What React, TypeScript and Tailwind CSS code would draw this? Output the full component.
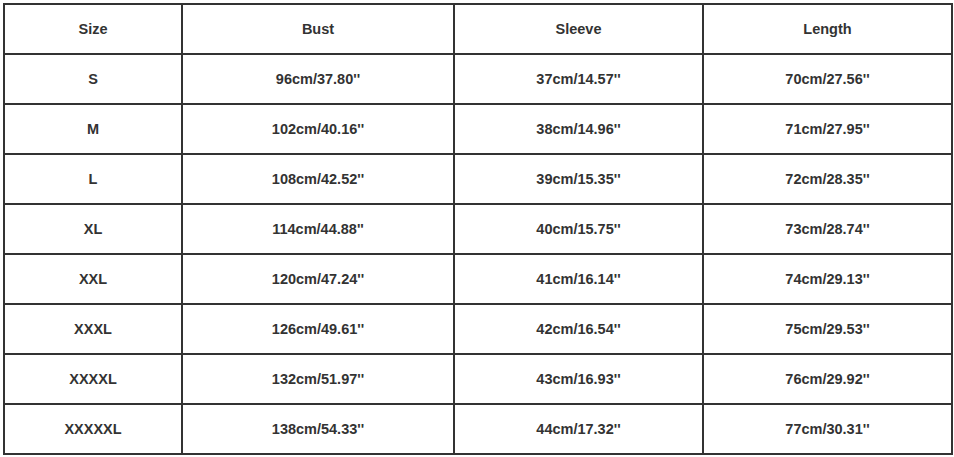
import React from "react";

const header = ["Size", "Bust", "Sleeve", "Length"];
const rows: string[][] = [
  ["S", "96cm/37.80''", "37cm/14.57''", "70cm/27.56''"],
  ["M", "102cm/40.16''", "38cm/14.96''", "71cm/27.95''"],
  ["L", "108cm/42.52''", "39cm/15.35''", "72cm/28.35''"],
  ["XL", "114cm/44.88''", "40cm/15.75''", "73cm/28.74''"],
  ["XXL", "120cm/47.24''", "41cm/16.14''", "74cm/29.13''"],
  ["XXXL", "126cm/49.61''", "42cm/16.54''", "75cm/29.53''"],
  ["XXXXL", "132cm/51.97''", "43cm/16.93''", "76cm/29.92''"],
  ["XXXXXL", "138cm/54.33''", "44cm/17.32''", "77cm/30.31''"],
];

export default function App() {
  const all = [header, ...rows];
  return (
    <div className="w-[954px] h-[457px] bg-white pt-[3px] pl-[3px]" style={{ fontFamily: '"Liberation Sans", Arial, sans-serif' }}>
      <div className="grid grid-cols-[178px_272px_249px_249px] border-l-2 border-t-2 border-[#333] w-fit">
        {all.map((r, i) =>
          r.map((c, j) => (
            <div
              key={`${i}-${j}`}
              className="h-[50px] pt-[2px] border-r-2 border-b-2 border-[#333] flex items-center justify-center text-[14.5px] font-bold text-[#333]"
            >
              {c}
            </div>
          ))
        )}
      </div>
    </div>
  );
}
